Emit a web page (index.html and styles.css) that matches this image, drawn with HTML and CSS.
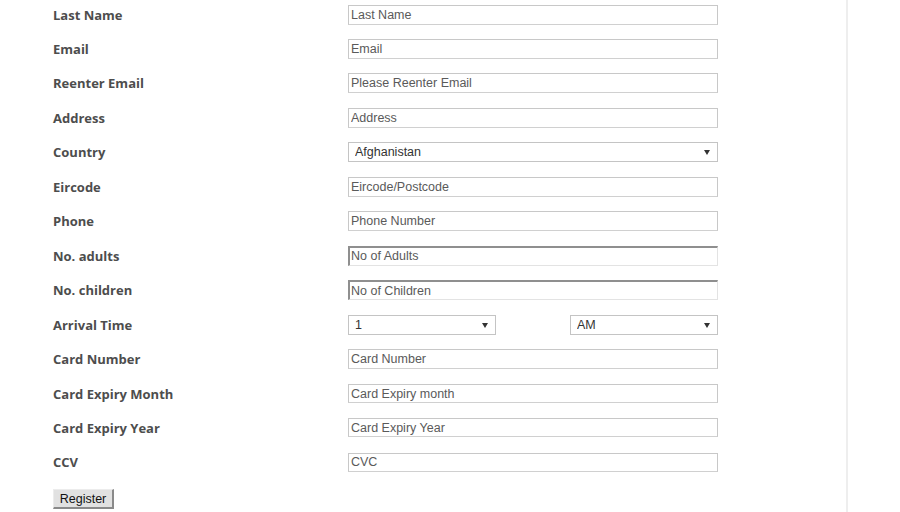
FILE: index.html
```html
<!DOCTYPE html>
<html>
<head>
<meta charset="utf-8">
<link rel="stylesheet" href="styles.css">
</head>
<body>
<div class="page">
  <div class="main">
    <form class="form">
      <label class="lbl">Last Name</label>
      <div class="ctl"><input class="inp" placeholder="Last Name"></div>
      <label class="lbl">Email</label>
      <div class="ctl"><input class="inp" placeholder="Email"></div>
      <label class="lbl">Reenter Email</label>
      <div class="ctl"><input class="inp" placeholder="Please Reenter Email"></div>
      <label class="lbl">Address</label>
      <div class="ctl"><input class="inp" placeholder="Address"></div>
      <label class="lbl">Country</label>
      <div class="ctl"><div class="sel sel-full"><select><option>Afghanistan</option></select></div></div>
      <label class="lbl">Eircode</label>
      <div class="ctl"><input class="inp" placeholder="Eircode/Postcode"></div>
      <label class="lbl">Phone</label>
      <div class="ctl"><input class="inp" placeholder="Phone Number"></div>
      <label class="lbl">No. adults</label>
      <div class="ctl"><input class="inp inset" placeholder="No of Adults"></div>
      <label class="lbl">No. children</label>
      <div class="ctl"><input class="inp inset" placeholder="No of Children"></div>
      <label class="lbl">Arrival Time</label>
      <div class="ctl time">
        <div class="sel sel-half"><select><option>1</option></select></div>
        <div class="sel sel-half"><select><option>AM</option></select></div>
      </div>
      <label class="lbl">Card Number</label>
      <div class="ctl"><input class="inp" placeholder="Card Number"></div>
      <label class="lbl">Card Expiry Month</label>
      <div class="ctl"><input class="inp big" placeholder="Card Expiry month"></div>
      <label class="lbl">Card Expiry Year</label>
      <div class="ctl"><input class="inp big" placeholder="Card Expiry Year"></div>
      <label class="lbl">CCV</label>
      <div class="ctl"><input class="inp big" placeholder="CVC"></div>
      <div class="actions"><button type="button" class="btn">Register</button></div>
    </form>
  </div>
  <div class="side"></div>
</div>
</body>
</html>
```
FILE: styles.css
```css
html, body {
  margin: 0;
  padding: 0;
  background: #fff;
  overflow: hidden;
}
.page {
  display: flex;
  width: 900px;
  height: 512px;
}
.main {
  width: 846px;
  border-right: 2px solid #eeeeee;
  box-sizing: content-box;
}
.side {
  flex: 1;
}
.form {
  display: grid;
  grid-template-columns: 295px 370px;
  grid-auto-rows: 34.46px;
  align-items: center;
  padding-left: 53px;
  margin: -2.7px 0 0 0;
}
.lbl {
  font-family: "Open Sans", sans-serif;
  font-weight: 700;
  font-size: 13px;
  color: #4d4d4d;
}
.ctl {
  display: flex;
  align-items: center;
}
.inp {
  box-sizing: border-box;
  width: 370px;
  height: 20px;
  margin: 0;
  padding: 0 2px;
  border: 1px solid #c8c8c8;
  border-bottom-color: #d0d0d0;
  outline: none;
  font-family: "Liberation Sans", Arial, sans-serif;
  font-size: 12.5px;
  color: #555;
  background: #fff;
}
.inp.big {
  height: 19px;
}
.inp::placeholder {
  color: #5a5a5a;
  opacity: 1;
}
.inp.inset {
  border-top: 2px solid #8f8f8f;
  border-left: 2px solid #8f8f8f;
  border-right: 1px solid #e3e3e3;
  border-bottom: 1px solid #e3e3e3;
  padding-left: 1px;
}
.time {
  justify-content: space-between;
}
.sel {
  position: relative;
}
.sel-full { width: 370px; }
.sel-half { width: 148px; }
.sel select {
  -webkit-appearance: none;
  appearance: none;
  box-sizing: border-box;
  width: 100%;
  height: 20px;
  margin: 0;
  padding: 0 0 0 6px;
  border: 1px solid #c4c4c4;
  border-radius: 0;
  background: #fff;
  font-family: "Liberation Sans", Arial, sans-serif;
  font-size: 12.5px;
  color: #333;
  outline: none;
}
.sel::after {
  content: "";
  position: absolute;
  right: 8px;
  top: 8px;
  width: 0;
  height: 0;
  border-left: 3px solid transparent;
  border-right: 3px solid transparent;
  border-top: 5px solid #333;
  pointer-events: none;
}
.actions {
  grid-column: 1 / span 2;
  align-self: start;
  padding-top: 9px;
}
.btn {
  box-sizing: border-box;
  height: 20px;
  width: 61px;
  padding: 0;
  font-family: "Liberation Sans", Arial, sans-serif;
  font-size: 12.5px;
  color: #111;
  background: #e1e1e1;
  border-top: 1px solid #ececec;
  border-left: 1px solid #ececec;
  border-right: 2px solid #8a8a8a;
  border-bottom: 2px solid #8a8a8a;
}
```
